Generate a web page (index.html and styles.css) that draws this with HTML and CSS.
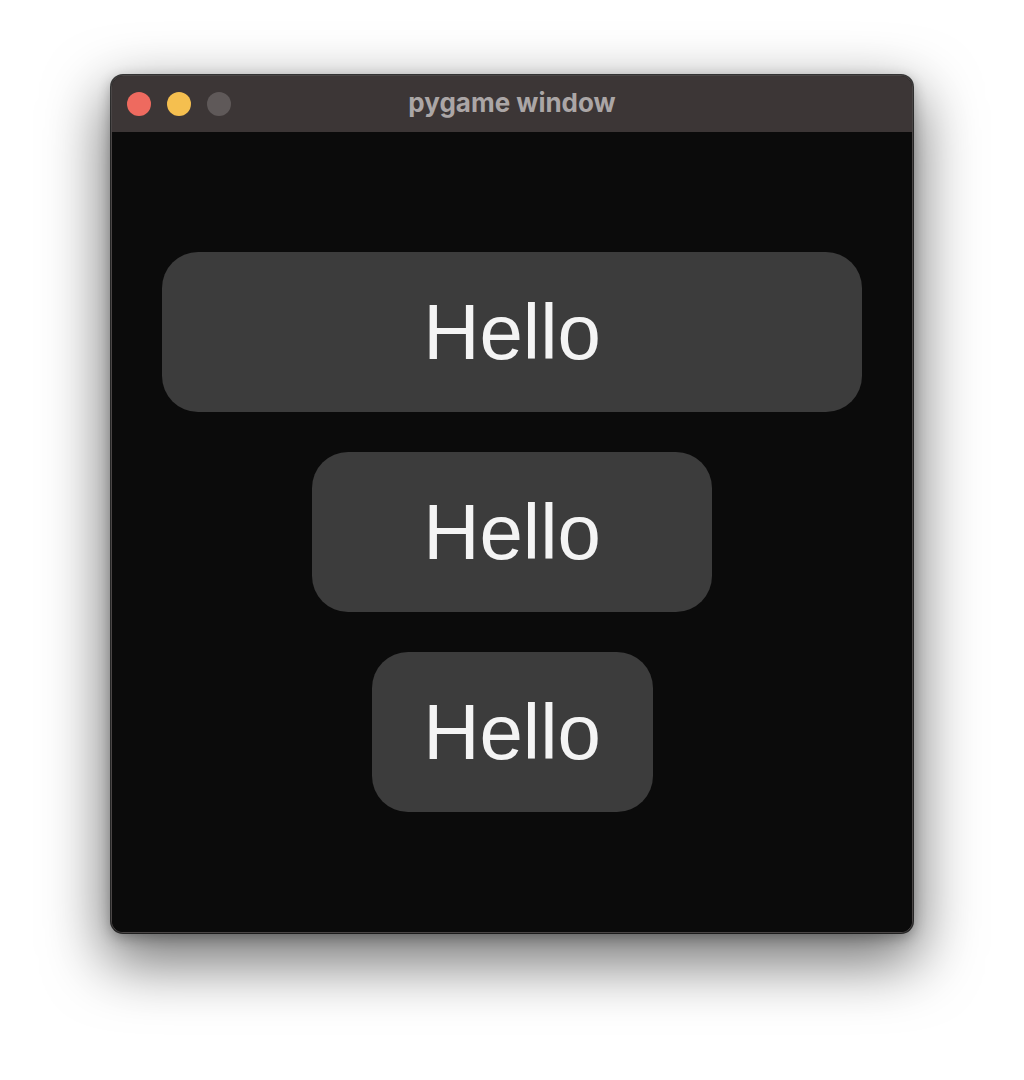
FILE: index.html
```html
<!DOCTYPE html>
<html>
<head>
<meta charset="utf-8">
<link rel="stylesheet" href="styles.css">
</head>
<body>
<div class="window">
  <div class="titlebar">
    <div class="lights">
      <span class="light red"></span>
      <span class="light yellow"></span>
      <span class="light grey"></span>
    </div>
    <div class="title">pygame window</div>
  </div>
  <div class="content">
    <div class="btn btn-wide">Hello</div>
    <div class="btn btn-mid">Hello</div>
    <div class="btn btn-small">Hello</div>
  </div>
</div>
</body>
</html>
```
FILE: styles.css
```css
html, body {
  margin: 0;
  padding: 0;
  background: #ffffff;
}
body {
  width: 1024px;
  height: 1080px;
  padding: 75px 0 0 111px;
  box-sizing: border-box;
  overflow: hidden;
}
.window {
  width: 802px;
  border-radius: 12px;
  overflow: hidden;
  background: #0b0b0b;
  box-shadow: 0 0 0 1px rgba(0,0,0,0.75), 0 24px 60px 6px rgba(0,0,0,0.55), 0 4px 14px rgba(0,0,0,0.3);
  border: 1px solid #4a4646;
  box-sizing: border-box;
}
.titlebar {
  position: relative;
  height: 56px;
  background: #3c3636;
  display: flex;
  align-items: center;
  justify-content: center;
}
.lights {
  position: absolute;
  left: 15px;
  top: 16px;
  display: flex;
  gap: 16px;
}
.light {
  width: 24px;
  height: 24px;
  border-radius: 50%;
  display: block;
}
.red { background: #ee6a5f; }
.yellow { background: #f5bf4f; }
.grey { background: #5f5959; }
.title {
  font-family: Inter, "Noto Sans", sans-serif;
  font-weight: 700;
  font-size: 26px;
  color: #aba6a6;
  letter-spacing: 0;
  margin-top: -3px;
}
.content {
  height: 800px;
  background: #0b0b0b;
  display: flex;
  flex-direction: column;
  align-items: center;
  padding-top: 120px;
  box-sizing: border-box;
  gap: 40px;
}
.btn {
  height: 160px;
  background: #3c3c3c;
  border-radius: 36px;
  display: flex;
  align-items: center;
  justify-content: center;
  font-family: "Liberation Sans", Arial, sans-serif;
  font-size: 78px;
  color: #f4f4f4;
  line-height: 1;
}
.btn-wide { width: 700px; }
.btn-mid { width: 400px; }
.btn-small { width: 281px; }
```
